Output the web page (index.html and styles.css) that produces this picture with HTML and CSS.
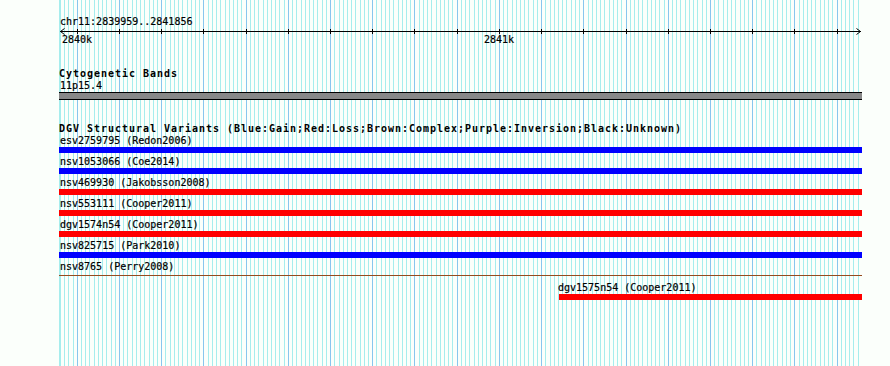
FILE: index.html
```html
<!DOCTYPE html>
<html lang="en">
  <head>
    <meta charset="UTF-8" />
    <title>chr11:2839959..2841856</title>
    <link rel="stylesheet" href="styles.css">
  </head>
  <body>
    <div class="page">
      <!-- base position guide lines, filled in by script.js -->
      <svg id="grid" class="grid" width="890" height="366"></svg>

      <!-- BASE POSITION RULER -->
      <div class="ruler">
        <div class="ruler-pos">chr11:2839959..2841856</div>
        <svg id="axis" class="ruler-axis" width="890" height="19">
          <line class="axis-line" x1="60" y1="3.5" x2="861" y2="3.5" />
          <polyline class="axis-line" points="64.5,0.5 60.5,3.5 64.5,6.5" />
          <polyline class="axis-line" points="856.5,0.5 860.5,3.5 856.5,6.5" />
          <text class="axis-label" x="77" y="15">2840k</text>
          <text class="axis-label" x="499" y="15">2841k</text>
        </svg>
      </div>

      <!-- CYTOGENETIC BANDS -->
      <section class="track cyto">
        <h2 class="track-title">Cytogenetic Bands</h2>
        <span class="item-label">11p15.4</span>
        <div class="band"></div>
      </section>

      <!-- DGV STRUCTURAL VARIANTS -->
      <section class="track dgv">
        <h2 class="track-title">DGV Structural Variants (Blue:Gain;Red:Loss;Brown:Complex;Purple:Inversion;Black:Unknown)</h2>
        <ul class="items">
          <li class="item">
            <span class="item-label">esv2759795 (Redon2006)</span>
            <div class="bar gain"></div>
          </li>
          <li class="item">
            <span class="item-label">nsv1053066 (Coe2014)</span>
            <div class="bar gain"></div>
          </li>
          <li class="item">
            <span class="item-label">nsv469930 (Jakobsson2008)</span>
            <div class="bar loss"></div>
          </li>
          <li class="item">
            <span class="item-label">nsv553111 (Cooper2011)</span>
            <div class="bar loss"></div>
          </li>
          <li class="item">
            <span class="item-label">dgv1574n54 (Cooper2011)</span>
            <div class="bar loss"></div>
          </li>
          <li class="item">
            <span class="item-label">nsv825715 (Park2010)</span>
            <div class="bar gain"></div>
          </li>
          <li class="item">
            <span class="item-label">nsv8765 (Perry2008)</span>
            <div class="bar complex"></div>
          </li>
          <li class="item item-offset" style="margin-left: 500px">
            <span class="item-label">dgv1575n54 (Cooper2011)</span>
            <div class="bar loss"></div>
          </li>
        </ul>
      </section>
    </div>

    <script src="script.js"></script>
  </body>
</html>
```

FILE: styles.css
```css
/* RESET */
* {
  box-sizing: border-box;
}
body {
  margin: 0;
  background: #fbfffb;
  font-family: "DejaVu Sans Mono", monospace;
  font-size: 10px;
  color: #000;
}

.page {
  position: relative;
  width: 890px;
  height: 366px;
  overflow: hidden;
}

/* Guide lines sit behind every track */
.grid {
  position: absolute;
  top: 0;
  left: 0;
}
.grid .minor {
  stroke: #a6eded;
}
.grid .major {
  stroke: #88c6ee;
}

/* RULER */
.ruler {
  position: relative;
}
.ruler-pos {
  height: 28px;
  padding: 15px 0 0 60px;
  line-height: 13px;
  white-space: nowrap;
  -webkit-text-stroke: 0.2px #000;
}
.ruler-axis {
  display: block;
}
.axis-line,
.axis-tick {
  stroke: #000;
  stroke-width: 1;
  fill: none;
}
.axis-label {
  font-family: "DejaVu Sans Mono", monospace;
  font-size: 10px;
  text-anchor: middle;
  fill: #000;
  stroke: #000;
  stroke-width: 0.2px;
}

/* TRACKS */
.track {
  position: relative;
  width: 862px;
  padding-left: 59px;
}
.track-title {
  margin: 0;
  height: 7px;
  font-size: 10px;
  font-weight: bold;
  letter-spacing: 0.98px;
  line-height: 7px;
  white-space: nowrap;
}
.item-label {
  display: block;
  height: 15px;
  padding-left: 1px;
  line-height: 17px;
  white-space: nowrap;
  -webkit-text-stroke: 0.2px #000;
}

.cyto {
  margin-top: 23px;
}
.band {
  height: 8px;
  border-top: 1px solid #000;
  border-bottom: 1px solid #000;
  background: #888;
}

.dgv {
  margin-top: 25px;
}
.items {
  list-style: none;
  margin: 0;
  padding: 0;
}
.item-offset .item-label {
  margin-left: -2px;
}
.bar {
  height: 6px;
}
.bar.gain {
  background: #0000ff;
}
.bar.loss {
  background: #ff0000;
}
.bar.complex {
  height: 1px;
  margin: 2px 0 3px;
  background: #964b1e;
}
```

FILE: script.js
```js
// Base position guide lines (every 10bp) and ruler ticks (every 100bp)
const SVG_NS = "http://www.w3.org/2000/svg";
const START = 2839959;
const END = 2841856;
const LEFT = 59.5;
const SCALE = 0.4221; // px per base

function xOf(bp) {
  return Math.round(LEFT + (bp - START) * SCALE);
}

function addLine(parent, x1, y1, x2, y2, cls) {
  const el = document.createElementNS(SVG_NS, "line");
  el.setAttribute("x1", x1);
  el.setAttribute("y1", y1);
  el.setAttribute("x2", x2);
  el.setAttribute("y2", y2);
  el.setAttribute("class", cls);
  parent.appendChild(el);
}

const grid = document.getElementById("grid");
const axis = document.getElementById("axis");

// left edge of the window
addLine(grid, 59.5, 0, 59.5, 366, "minor");

for (let bp = 2839960; bp <= END; bp += 10) {
  const x = xOf(bp) + 0.5;
  const major = bp % 100 === 0;
  addLine(grid, x, 0, x, 366, major ? "major" : "minor");
  if (major) {
    addLine(axis, x, 1, x, 6, "axis-tick");
  }
}
```
